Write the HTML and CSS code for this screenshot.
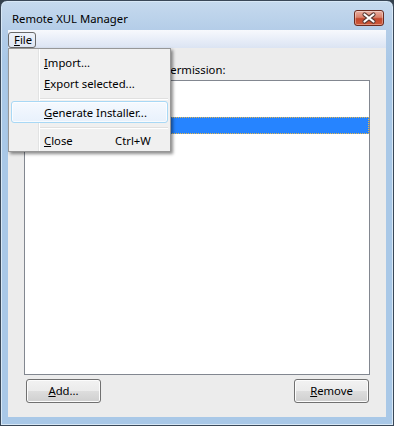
FILE: index.html
```html
<!DOCTYPE html>
<html>
<head>
<meta charset="utf-8">
<link rel="stylesheet" href="styles.css">
</head>
<body>
<div class="window">
  <div class="titlebar">
    <span class="title">Remote XUL Manager</span>
    <div class="close">
      <svg width="30" height="16" viewBox="0 0 30 16">
        <path d="M10.5 4.5 L19.5 11.5 M19.5 4.5 L10.5 11.5" stroke="#5a3a34" stroke-width="4.2" stroke-linecap="round" fill="none"/>
        <path d="M10.5 4.5 L19.5 11.5 M19.5 4.5 L10.5 11.5" stroke="#ffffff" stroke-width="2.2" stroke-linecap="round" fill="none"/>
      </svg>
    </div>
  </div>
  <div class="client">
    <div class="menubar">
      <span class="menu-file"><u>F</u>ile</span>
    </div>
    <div class="content">
      <div class="label">Sites that use remote XUL permission:</div>
      <div class="listbox">
        <div class="row"></div>
        <div class="row"></div>
        <div class="row selected"></div>
      </div>
      <div class="buttons">
        <button class="btn"><u>A</u>dd...</button>
        <button class="btn"><u>R</u>emove</button>
      </div>
    </div>
    <div class="popup">
      <div class="item"><span class="item-label"><u>I</u>mport...</span></div>
      <div class="item"><span class="item-label"><u>E</u>xport selected...</span></div>
      <div class="sep"></div>
      <div class="item hover"><span class="item-label"><u>G</u>enerate Installer...</span></div>
      <div class="sep"></div>
      <div class="item"><span class="item-label short"><u>C</u>lose</span><span class="shortcut">Ctrl+W</span></div>
    </div>
  </div>
</div>
</body>
</html>
```
FILE: styles.css
```css
* { box-sizing: border-box; }
html, body { margin: 0; padding: 0; }
body {
  background: #34414d;
  font-family: "Noto Sans", "Open Sans", sans-serif;
  font-size: 11.3px;
  color: #000;
  width: 394px;
  height: 426px;
  overflow: hidden;
}
.window {
  width: 394px;
  height: 426px;
  border: 1px solid #3a4858;
  border-radius: 7px 7px 0 0;
  background: linear-gradient(180deg, #c6daee 0px, #b4cde8 29px, #a9c8e7 60px, #a9c8e7 100%);
  display: flex;
  flex-direction: column;
  padding: 0 7px 8px 7px;
  box-shadow: inset 0 0 0 1px #d8e8f6;
}
.titlebar {
  height: 29px;
  display: flex;
  align-items: flex-start;
  flex: none;
}
.title {
  margin-left: 4px;
  margin-top: 10px;
  line-height: 16px;
  color: #000;
}
.close {
  margin-left: auto;
  margin-right: 2px;
  margin-top: 9px;
  width: 30px;
  height: 16px;
  border: 1px solid #6b2a1e;
  border-radius: 3px;
  background: linear-gradient(180deg, #eab0a2 0%, #d9816b 45%, #c2472d 55%, #cf5a3a 100%);
  box-shadow: inset 0 0 0 1px rgba(255,255,255,0.35);
  display: flex;
  align-items: center;
  justify-content: center;
  overflow: hidden;
}
.close svg { display: block; flex: none; }
.client {
  flex: 1;
  display: flex;
  flex-direction: column;
  background: #ececec;
  position: relative;
}
.menubar {
  height: 18px;
  flex: none;
  background: linear-gradient(180deg, #f7f9fd 0%, #e9eef8 50%, #dbe4f3 100%);
  display: flex;
  align-items: flex-start;
}
.menu-file {
  margin-left: 0px;
  margin-top: 2px;
  width: 28px;
  height: 16px;
  border: 1px solid #6a6a6a;
  border-radius: 3px;
  background: linear-gradient(180deg, #eef2f9, #dfe6f2);
  line-height: 14px;
  padding-left: 5px;
}
.content {
  flex: 1;
  display: flex;
  flex-direction: column;
  padding: 14px 16px 14px 16px;
}
.label {
  height: 15px;
  line-height: 15px;
  margin-bottom: 3px;
  white-space: nowrap;
}
.listbox {
  flex: 1;
  background: #fff;
  border: 1px solid #828790;
  padding-top: 2px;
}
.row { height: 17px; }
.row.selected {
  background: #2684ff;
  outline: 1px dotted #e8b84a;
  outline-offset: -1px;
}
.buttons {
  margin-top: 4px;
  display: flex;
  justify-content: space-between;
  padding: 0 1px 0 2px;
}
.btn {
  width: 75px;
  height: 24px;
  border: 1px solid #707070;
  border-radius: 3px;
  background: linear-gradient(180deg, #f2f2f2 0%, #ebebeb 50%, #dddddd 51%, #cfcfcf 100%);
  box-shadow: inset 0 0 0 1px #fcfcfc;
  font-family: inherit;
  font-size: 11.3px;
  color: #000;
  padding: 0;
  line-height: 20px;
}
.popup {
  position: absolute;
  left: 0;
  top: 18px;
  width: 163px;
  height: 104px;
  border: 1px solid #979797;
  padding: 3px 2px 0 2px;
  background-color: #f0f0f0;
  background-image: linear-gradient(90deg, transparent 29px, #e2e3e3 29px, #e2e3e3 30px, #ffffff 30px, #ffffff 31px, transparent 31px);
  box-shadow: 2px 2px 3px rgba(0,0,0,0.45);
}
.item {
  height: 21px;
  display: flex;
  align-items: center;
  padding-left: 32px;
  white-space: nowrap;
  border: 1px solid transparent;
  border-radius: 3px;
}
.item.hover {
  height: 22px;
  border-color: #a8d8f5;
  background: linear-gradient(180deg, #f5f9fe 0%, #e8f1fc 100%);
  box-shadow: inset 0 0 0 1px rgba(255,255,255,0.7);
}
.item-label.short { width: 71px; }
.sep {
  height: 7px;
  margin-left: 29px;
  background: linear-gradient(180deg, transparent 4px, #e0e0e0 4px, #e0e0e0 5px, #ffffff 5px, #ffffff 6px, transparent 6px);
}
```
